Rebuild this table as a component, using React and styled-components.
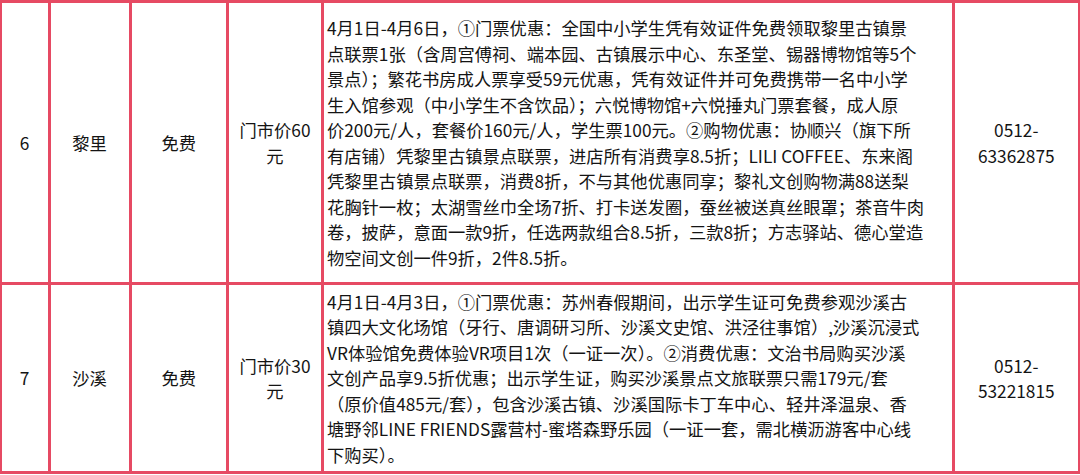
import React from 'react';
import styled, { createGlobalStyle } from 'styled-components';

const GlobalStyle = createGlobalStyle`
  html, body {
    margin: 0;
    padding: 0;
    background: #fff;
  }
  body {
    font-family: "Noto Sans CJK SC", "Noto Sans", sans-serif;
    color: #141414;
  }
`;

const rows = [
  {
    no: '6',
    name: '黎里',
    fee: '免费',
    price: '门市价60元',
    height: 279,
    lines: [
      '4月1日-4月6日，①门票优惠：全国中小学生凭有效证件免费领取黎里古镇景',
      '点联票1张（含周宫傅祠、端本园、古镇展示中心、东圣堂、锡器博物馆等5个',
      '景点）；繁花书房成人票享受59元优惠，凭有效证件并可免费携带一名中小学',
      '生入馆参观（中小学生不含饮品）；六悦博物馆+六悦捶丸门票套餐，成人原',
      '价200元/人，套餐价160元/人，学生票100元。②购物优惠：协顺兴（旗下所',
      '有店铺）凭黎里古镇景点联票，进店所有消费享8.5折；LILI COFFEE、东来阁',
      '凭黎里古镇景点联票，消费8折，不与其他优惠同享；黎礼文创购物满88送梨',
      '花胸针一枚；太湖雪丝巾全场7折、打卡送发圈，蚕丝被送真丝眼罩；茶音牛肉',
      '卷，披萨，意面一款9折，任选两款组合8.5折，三款8折；方志驿站、德心堂造',
      '物空间文创一件9折，2件8.5折。',
    ],
    phone: ['0512-', '63362875'],
  },
  {
    no: '7',
    name: '沙溪',
    fee: '免费',
    price: '门市价30元',
    height: 186,
    lines: [
      '4月1日-4月3日，①门票优惠：苏州春假期间，出示学生证可免费参观沙溪古',
      '镇四大文化场馆（牙行、唐调研习所、沙溪文史馆、洪泾往事馆）,沙溪沉浸式',
      'VR体验馆免费体验VR项目1次（一证一次）。②消费优惠：文治书局购买沙溪',
      '文创产品享9.5折优惠；出示学生证，购买沙溪景点文旅联票只需179元/套',
      '（原价值485元/套），包含沙溪古镇、沙溪国际卡丁车中心、轻井泽温泉、香',
      '塘野邻LINE FRIENDS露营村-蜜塔森野乐园（一证一套，需北横沥游客中心线',
      '下购买）。',
    ],
    phone: ['0512-', '53221815'],
  },
];

const App = () => (
  <>
    <GlobalStyle />
    <Table rowHeights={rows.map((r) => r.height)}>
      {rows.map((row) => (
        <React.Fragment key={row.no}>
          <Cell>{row.no}</Cell>
          <Cell>{row.name}</Cell>
          <Cell>{row.fee}</Cell>
          <Cell>{row.price}</Cell>
          <Cell align="left">
            <Detail>
              {row.lines.map((line, i) => (
                <Line key={i}>{line}</Line>
              ))}
            </Detail>
          </Cell>
          <Cell>
            <div>
              {row.phone.map((p) => (
                <Line key={p}>{p}</Line>
              ))}
            </div>
          </Cell>
        </React.Fragment>
      ))}
    </Table>
  </>
);

export default App;

const Table = styled.div`
  display: grid;
  grid-template-columns: 46px 78px 94.5px 92px 628px 122.5px;
  grid-template-rows: ${({ rowHeights }) => rowHeights.map((h) => `${h}px`).join(' ')};
  gap: 3px;
  padding: 3px;
  margin-left: -1.5px;
  width: max-content;
  background: #e64a63;
`;

const Cell = styled.div`
  background: #fff;
  display: flex;
  align-items: center;
  justify-content: ${({ align }) => (align === 'left' ? 'flex-start' : 'center')};
  text-align: ${({ align }) => (align === 'left' ? 'left' : 'center')};
  padding: ${({ align }) => (align === 'left' ? '0 0 0 3px' : '0 6px')};
  font-size: 17.3px;
  line-height: 25.5px;
  overflow: hidden;
`;

const Detail = styled.div`
  white-space: nowrap;
`;

const Line = styled.div``;
